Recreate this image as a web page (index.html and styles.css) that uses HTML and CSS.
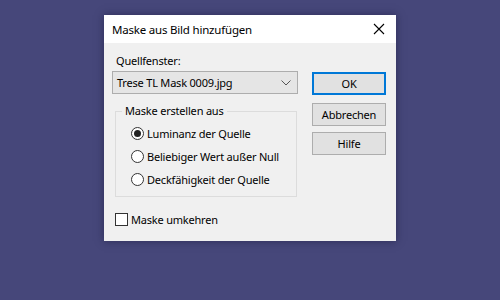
FILE: index.html
```html
<!DOCTYPE html>
<html>
<head>
<meta charset="utf-8">
<title>Maske aus Bild hinzufügen</title>
<link rel="stylesheet" href="styles.css">
</head>
<body>
<div class="dlg">
  <div class="titlebar">
    <span class="title">Maske aus Bild hinzufügen</span>
    <svg class="close" width="12" height="12" viewBox="0 0 12 12"><path d="M1 1L11 11M11 1L1 11" stroke="#000" stroke-width="1.1" fill="none"/></svg>
  </div>
  <div class="content">
    <div class="left">
      <div class="lbl">Quellfenster:</div>
      <div class="combo">
        <span>Trese TL Mask 0009.jpg</span>
        <svg width="10" height="6" viewBox="0 0 10 6"><path d="M0.5 0.5L5 5L9.5 0.5" stroke="#555" stroke-width="1" fill="none"/></svg>
      </div>
      <div class="group">
        <div class="legend">Maske erstellen aus</div>
        <div class="radio on"><span class="dot"></span>Luminanz der Quelle</div>
        <div class="radio"><span class="dot"></span>Beliebiger Wert außer Null</div>
        <div class="radio"><span class="dot"></span>Deckfähigkeit der Quelle</div>
      </div>
      <div class="check"><span class="box"></span>Maske umkehren</div>
    </div>
    <div class="right">
      <div class="btn def">OK</div>
      <div class="btn">Abbrechen</div>
      <div class="btn">Hilfe</div>
    </div>
  </div>
</div>
</body>
</html>
```

FILE: styles.css
```css
body, html{
margin:0;
padding:0;
width:100%;
height:100%;
background:#46477a;
font-family:"Noto Sans", "Liberation Sans", sans-serif;
font-size:11px;
letter-spacing:-0.2px;
color:#000;
}
body{
padding:15px 0 0 104px;
box-sizing:border-box;
}
.dlg{
width:292px;
height:226px;
background:#f0f0f0;
box-shadow:0 0 8px rgba(20,20,50,0.5);
}
.titlebar{
height:28px;
background:#fff;
display:flex;
align-items:center;
justify-content:space-between;
padding:0 11px 0 8px;
}
.title{
font-size:11.5px;
}
.content{
display:flex;
padding:9px 10px 0 8px;
}
.left{
width:186px;
}
.lbl{
padding-left:4px;
height:19px;
line-height:17px;
}
.combo{
height:21px;
border:1px solid #adadad;
background:#e5e5e5;
display:flex;
align-items:center;
justify-content:space-between;
padding:0 6px 0 4px;
}
.group{
margin:17px 1px 0 3px;
border:1px solid #dcdcdc;
height:86px;
position:relative;
padding-top:10px;
box-sizing:border-box;
}
.legend{
position:absolute;
top:-9px;
left:6px;
padding:0 3px;
background:#f0f0f0;
line-height:16px;
}
.radio{
display:flex;
align-items:center;
height:23px;
line-height:23px;
padding-left:15px;
}
.dot{
width:11px;
height:11px;
border:1px solid #333;
border-radius:50%;
background:#fff;
margin-right:3px;
position:relative;
flex:none;
}
.radio.on .dot::after{
content:"";
position:absolute;
left:2px;
top:2px;
width:7px;
height:7px;
border-radius:50%;
background:#222;
}
.check{
display:flex;
align-items:center;
margin:16px 0 0 3px;
height:13px;
}
.box{
width:11px;
height:11px;
border:1px solid #333;
background:#fff;
margin-right:3px;
flex:none;
}
.right{
margin-left:14px;
padding-top:20px;
}
.btn{
width:72px;
height:21px;
border:1px solid #adadad;
background:#e1e1e1;
display:flex;
align-items:center;
justify-content:center;
margin-bottom:6px;
}
.btn.def{
width:70px;
height:19px;
border:2px solid #0078d7;
margin-bottom:8px;
}
```
